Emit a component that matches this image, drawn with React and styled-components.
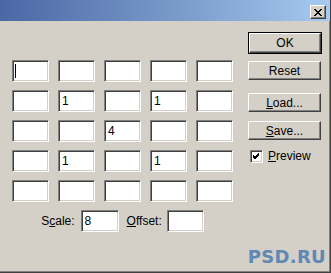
import React from 'react';
import styled, { createGlobalStyle } from 'styled-components';

const GlobalStyle = createGlobalStyle`
    html, body {
        margin: 0;
        padding: 0;
        background: #d4d0c8;
    }
`;

const sunken = `
    border-top: 1px solid #808080;
    border-left: 1px solid #808080;
    border-bottom: 1px solid #ffffff;
    border-right: 1px solid #ffffff;
    box-shadow: inset 1px 1px 0 #404040, inset -1px -1px 0 #d4d0c8;
`;

const raised = `
    border-top: 1px solid #ffffff;
    border-left: 1px solid #ffffff;
    border-bottom: 1px solid #404040;
    border-right: 1px solid #404040;
    box-shadow: inset -1px -1px 0 #808080;
`;

// 창 전체
const Window = styled.div`
    position: relative;
    width: 331px;
    height: 273px;
    box-sizing: border-box;
    display: flex;
    flex-direction: column;
    background: #d4d0c8;
    font-family: 'Liberation Sans', Arial, sans-serif;
    font-size: 11px;
    color: #000;
    border-right: 1px solid #404040;
    border-bottom: 1px solid #404040;
    overflow: hidden;
`;

const TitleBar = styled.div`
    height: 21px;
    flex: none;
    display: flex;
    justify-content: flex-end;
    align-items: flex-start;
    padding: 5px 4px 0 0;
    box-sizing: border-box;
    background: linear-gradient(to right, #4a68a5 0%, #7a9ccb 55%, #a6caf0 100%);
`;

const CloseButton = styled.div`
    width: 16px;
    height: 14px;
    box-sizing: border-box;
    background: #d4d0c8;
    display: flex;
    align-items: center;
    justify-content: center;
    ${raised}
`;

const Body = styled.div`
    flex: 1;
    display: flex;
    border-right: 1px solid #808080;
    border-bottom: 1px solid #808080;
`;

const Left = styled.div`
    display: flex;
    flex-direction: column;
    align-items: center;
    padding: 39px 0 0 12px;
`;

const Grid = styled.div`
    display: grid;
    grid-template-columns: repeat(5, 37px);
    grid-auto-rows: 22px;
    column-gap: 9px;
    row-gap: 8px;
`;

const Field = styled.div`
    box-sizing: border-box;
    width: ${p => p.w || 37}px;
    height: 22px;
    background: #fff;
    display: flex;
    align-items: center;
    padding-left: 3px;
    font-size: 12px;
    ${sunken}
`;

const Caret = styled.span`
    display: block;
    width: 1px;
    height: 14px;
    background: #000;
    margin-left: -1px;
`;

const ScaleRow = styled.div`
    display: flex;
    align-items: center;
    margin-top: 8px;
`;

const Label = styled.span`
    margin-right: ${p => p.gap || 6}px;
    margin-left: ${p => p.lead || 0}px;
    font-size: 12px;
`;

const Key = styled.span`
    text-decoration: underline;
`;

const Right = styled.div`
    display: flex;
    flex-direction: column;
    padding: 11px 0 0 15px;
`;

const DefaultFrame = styled.div`
    width: 74px;
    height: 22px;
    box-sizing: border-box;
    border: 1px solid #000;
`;

const Button = styled.div`
    width: ${p => (p.inner ? 72 : 73)}px;
    height: ${p => (p.inner ? 20 : 19)}px;
    box-sizing: border-box;
    margin-top: ${p => p.top || 0}px;
    display: flex;
    align-items: center;
    justify-content: center;
    font-size: 12px;
    background: #d4d0c8;
    ${raised}
`;

const CheckRow = styled.label`
    display: flex;
    align-items: center;
    margin: 9px 0 0 2px;
    font-size: 12px;
`;

const Box = styled.div`
    width: 13px;
    height: 13px;
    box-sizing: border-box;
    background: #fff;
    margin-right: 5px;
    display: flex;
    align-items: center;
    justify-content: center;
    ${sunken}
`;

const Watermark = styled.div`
    position: absolute;
    right: 4px;
    bottom: 5px;
    font-family: 'DejaVu Sans', Verdana, sans-serif;
    font-weight: bold;
    font-size: 18px;
    color: #5f88b3;
    letter-spacing: 0.3px;
`;

const values = [
    ['caret', '', '', '', ''],
    ['', '1', '', '1', ''],
    ['', '', '4', '', ''],
    ['', '1', '', '1', ''],
    ['', '', '', '', ''],
];

const App = () => (
    <Window>
        <GlobalStyle />
        <TitleBar>
            <CloseButton>
                <svg width="8" height="7" viewBox="0 0 8 7">
                    <path d="M0 0 L7 7 M1 0 L8 7 M7 0 L0 7 M8 0 L1 7" stroke="#000" strokeWidth="1" shapeRendering="crispEdges" />
                </svg>
            </CloseButton>
        </TitleBar>
        <Body>
            <Left>
                <Grid>
                    {values.flat().map((v, i) => (
                        <Field key={i}>{v === 'caret' ? <Caret /> : v}</Field>
                    ))}
                </Grid>
                <ScaleRow>
                    <Label>S<Key>c</Key>ale:</Label>
                    <Field w={38}>8</Field>
                    <Label lead={8} gap={5}><Key>O</Key>ffset:</Label>
                    <Field w={37} />
                </ScaleRow>
            </Left>
            <Right>
                <DefaultFrame>
                    <Button inner>OK</Button>
                </DefaultFrame>
                <Button top={7}>Reset</Button>
                <Button top={13}><Key>L</Key>oad...</Button>
                <Button top={9}><Key>S</Key>ave...</Button>
                <CheckRow>
                    <Box>
                        <svg width="7" height="7" viewBox="0 0 7 7">
                            <path d="M0 2 L2 4 L6 0 M0 3 L2 5 L6 1 M0 4 L2 6 L6 2" stroke="#000" strokeWidth="1" fill="none" shapeRendering="crispEdges" />
                        </svg>
                    </Box>
                    <span><Key>P</Key>review</span>
                </CheckRow>
            </Right>
        </Body>
        <Watermark>PSD.RU</Watermark>
    </Window>
);

export default App;
